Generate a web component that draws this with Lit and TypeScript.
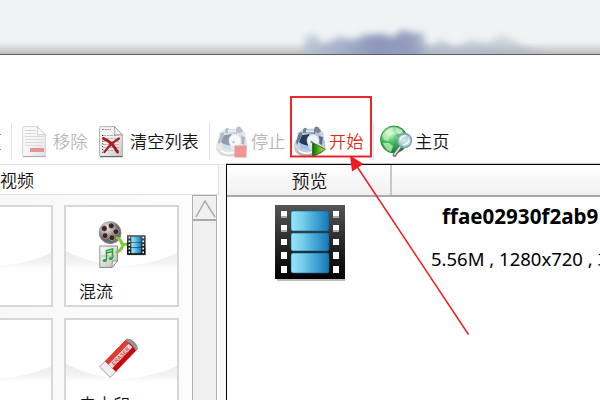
import { LitElement, html, css, svg } from "lit";
import { customElement } from "lit/decorators.js";

const docBase = (id: string) => svg`
  <defs><linearGradient id=${id} x1="0" y1="0" x2="1" y2="1"><stop offset="0" stop-color="#fafafa"/><stop offset=".55" stop-color="#ececec"/><stop offset="1" stop-color="#c4c4c4"/></linearGradient></defs>
  <path d="M1.500 .6H15.500L23.400 9V30.400H1.500Q.6 30.400 .6 29.500V1.500Q.6 .6 1.500 .6Z" fill="url(#${id})" stroke="#a5a5a5" stroke-width=".9"/>
  <path d="M1 30.600H23.500" stroke="#666" stroke-width="1.200"/>
  <path d="M15.500 .6Q16.500 6 15.500 9.200Q20 7.800 23.400 9Z" fill="#fff" stroke="#888" stroke-width=".8"/>`;

const removeIcon = html`<svg class="doc faded" viewBox="0 0 24 32">
  ${docBase("dr")}
  <path d="M3 4.500H14" stroke="#79bddd" stroke-width="1"/>
  <path d="M3 7.500H14M3 10.500H21M3 13.500H21M3 16.500H21M3 19.500H21" stroke="#a5abb1" stroke-width=".8"/>
  <rect x="8" y="22" width="14" height="4" fill="#d12a2a"/>
</svg>`;

const clearIcon = html`<svg class="doc" viewBox="0 0 24 32">
  ${docBase("dc")}
  <path d="M3 3.500H12" stroke="#777" stroke-width=".8" stroke-dasharray="2 .7"/>
  <path d="M4 9.500H20M4 12.500H20M4 15.500H20M4 18.500H20M4 21.500H20M4 24.500H20" stroke="#999" stroke-width=".7" stroke-dasharray="3 .6"/>
  <path d="M3.600 9V27" stroke="#222" stroke-width="1" stroke-dasharray="1 1.800"/>
  <path d="M4.500 12.500Q13 16 18.500 26" fill="none" stroke="#a81818" stroke-width="2.900" stroke-linecap="round"/>
  <path d="M20 12.500Q11 18 5.500 26" fill="none" stroke="#b51c1c" stroke-width="2.200" stroke-linecap="round"/>
</svg>`;

const machine = (id: string) => svg`
  <defs>
    <radialGradient id=${id} cx=".45" cy=".3" r=".8"><stop offset="0" stop-color="#fff"/><stop offset=".6" stop-color="#d6d8dc"/><stop offset="1" stop-color="#85898f"/></radialGradient>
    <linearGradient id="${id}g" x1="0" y1="0" x2="1" y2="0"><stop offset="0" stop-color="#0d6508"/><stop offset=".4" stop-color="#42ad1b"/><stop offset="1" stop-color="#c8f25c"/></linearGradient>
  </defs>
  <path d="M.5 20Q1 14 5 11L27 10Q31 14 31 20Q31 26 25 28Q17 32 6 29Q0 26 .5 20Z" fill="url(#${id})" stroke="#aeb2b8" stroke-width=".6"/>
  <path d="M4 7L9 3.500L26 3L29 7L29.500 17L25 24L8 25L3 19Z" fill="#d7dbe2" stroke="#a3aab5" stroke-width=".6"/>
  <path d="M9 4Q10 1 12 2L14 3.500H20L21 1Q24 -.5 25.500 3L27 6L21 8L9 7Z" fill="#7b828d"/>
  <path d="M12 3.500H20V6.500H12Z" fill="#cfe0ee"/>
  <path d="M5 7L9 6L6 13L3 19L2 16Z" fill="#607c9d"/>
  <path d="M8 9L16 8L13 13L14 20L8 18.500L5 16Z" fill="#253b58"/>
  <path d="M5 17L14 20L16 24L7 23Z" fill="#9cc5ec"/>
  <path d="M21 6L27 8L26 14L22 10Z" fill="#a9c1d8"/>
  <path d="M25 10L29 11L28 19L25.500 18Z" fill="#526d8b"/>
  <circle cx="19" cy="14.500" r="6" fill="#eff2f6" stroke="#c3c9d1" stroke-width=".6"/>
  <circle cx="17.500" cy="16" r="1.300" fill="#8b929c"/>
  <path d="M5 25Q11 29 18 26" fill="none" stroke="#fff" stroke-width="1.800"/>`;

const stopIcon = html`<svg class="machine faded" viewBox="0 0 32 32">
  ${machine("ms")}<rect x="18.500" y="19.500" width="12" height="12" fill="#df3030"/>
</svg>`;

const startIcon = html`<svg class="machine" viewBox="0 0 32 32">
  ${machine("mg")}<path d="M18.500 16.500L31.500 23.500L18.500 31Z" fill="url(#mgg)" stroke="#276417" stroke-width=".8"/>
</svg>`;

const globeIcon = html`<svg class="globe" viewBox="0 0 34 33">
  <defs>
    <radialGradient id="gl" cx=".35" cy=".28" r=".75"><stop offset="0" stop-color="#dcffe0"/><stop offset=".4" stop-color="#4fc466"/><stop offset="1" stop-color="#0b7c2a"/></radialGradient>
    <radialGradient id="lens"><stop offset="0" stop-color="#e4f3fa"/><stop offset="1" stop-color="#a4cbd9"/></radialGradient>
  </defs>
  <circle cx="14" cy="14.500" r="13.500" fill="url(#gl)" stroke="#28803a" stroke-width=".8"/>
  <path d="M2 11Q6 3 13 3L11 6L14 8L10 11L8 16L4 15ZM16 3L22 5L24 9L19 9L16 7ZM3 18L9 18L13 21L11 27Q5 25 3 18ZM16 13L22 11L25 14L20 18Z" fill="#c4f3c4" opacity=".72"/>
  <path d="M5 7Q14 -2 22 5Q24 10 12 10Q5 11 5 7Z" fill="#fff" opacity=".3"/>
  <path d="M20 22L14.500 30" stroke="#626b70" stroke-width="3.800" stroke-linecap="round"/>
  <path d="M20 22L14.500 29.500" stroke="#d6dcdf" stroke-width="1.700" stroke-linecap="round"/>
  <circle cx="24.500" cy="15.500" r="7" fill="url(#lens)" fill-opacity=".9" stroke="#829fac" stroke-width="1.500"/>
  <path d="M20 15Q21 10.500 26 11M23 20Q28 19 29 15" fill="none" stroke="#fff" stroke-width="1.200"/>
</svg>`;

const filmShape = (id: string) => svg`
  <defs>
    <linearGradient id="${id}b" x2="0" y2="1"><stop offset="0" stop-color="#555"/><stop offset=".5" stop-color="#292929"/><stop offset="1" stop-color="#000"/></linearGradient>
    <linearGradient id="${id}c"><stop offset="0" stop-color="#98e5f7"/><stop offset=".3" stop-color="#78cfeb"/><stop offset=".65" stop-color="#40a4d3"/><stop offset="1" stop-color="#1677b3"/></linearGradient>
    <linearGradient id="${id}h" x2="0" y2="1"><stop offset=".7" stop-color="#fff"/><stop offset=".75" stop-color="#aaa"/></linearGradient>
  </defs>
  <rect x="2" y="3" width="68" height="73" fill="#bdbdbd"/>
  <rect width="70" height="74" fill="url(#${id}b)"/>
  ${[6, 28, 48].map((y, i) => svg`<rect x="16" y=${y} width="38" height=${i === 1 ? 18 : 20} rx="2" fill="url(#${id}c)" stroke="#165d86" stroke-width=".6"/>`)}
  ${[6, 20, 34, 47, 61].map((y, i) => [6, 58].map((x) => svg`<rect x=${x} y=${y} width="6" height=${i === 2 ? 6 : 7} fill=${i < 2 ? `url(#${id}h)` : "#fff"}/>`))}`;

const muxIcon = html`<svg class="mux" viewBox="0 0 48 48">
  <defs>
    <radialGradient id="reel" cx=".35" cy=".3"><stop offset="0" stop-color="#f4f2ef"/><stop offset=".55" stop-color="#b2aeaa"/><stop offset="1" stop-color="#6d6967"/></radialGradient>
    <linearGradient id="music" x2="1" y2="1"><stop offset="0" stop-color="#fff"/><stop offset="1" stop-color="#bbb"/></linearGradient>
  </defs>
  <circle cx="12.500" cy="12.200" r="10.800" fill="#77716e"/>
  <circle cx="11.900" cy="11.400" r="10.900" fill="url(#reel)" stroke="#999" stroke-width=".5"/>
  <g fill="#3a2521" stroke="#ddd" stroke-width=".5"><circle cx="13.300" cy="4.800" r="2.900"/><circle cx="6.300" cy="7.500" r="2.900"/><circle cx="7" cy="14.700" r="2.900"/><circle cx="14" cy="16.700" r="2.900"/><circle cx="18" cy="10.700" r="2.900"/></g>
  <path d="M1.800 25H19.500V40L14 46.500H1.800Z" fill="url(#music)" stroke="#777" stroke-width=".8"/>
  <path d="M19.500 40L14 46.500L14.500 40Z" fill="#eee" stroke="#777" stroke-width=".6"/>
  <path d="M3 35H18" stroke="#b9b9b9"/>
  <path d="M8.500 39V29.500L14.500 28V37M8.500 32L14.500 30.500" fill="none" stroke="#21a837" stroke-width="1.500"/>
  <ellipse cx="6.800" cy="39.500" rx="2.100" ry="1.600" fill="#21a837"/><ellipse cx="12.800" cy="37.500" rx="2" ry="1.600" fill="#21a837"/>
  <path d="M18 16.500Q23 18 24 23L31 23.500M18 31.500Q23 30 25 24" fill="none" stroke="#80c93c" stroke-width="3"/>
  <g transform="translate(29 14.200) scale(.265)">${filmShape("fs")}</g>
</svg>`;

const eraserIcon = html`<svg class="eraser" viewBox="0 0 42 42">
  <g transform="translate(.5 29) rotate(-46)">
    <path d="M0 0H9V15H0Z" fill="#eee" stroke="#999" stroke-width=".8"/>
    <path d="M8 0H39Q42 2 42 7.500Q42 13 39 15H8Z" fill="#c90808"/>
    <path d="M8 0H39Q41 2 41.500 5H8Z" fill="#dd3b35"/>
    <path d="M8 4.800H37V10H8Z" fill="#f3dddd"/>
    <path d="M37.500 0H39Q42 2 42 7.500Q42 13 39 15H37Q39 8 37.500 0Z" fill="#8f9797"/>
    <text class="eraser-text" x="11" y="9.600" textLength="23">ERASER</text>
  </g>
</svg>`;

@customElement("function-card")
class FunctionCard extends LitElement {
  static properties = { label: {}, icon: { attribute: false } };
  declare label: string;
  declare icon: unknown;
  static styles = css`
    :host { display: block; box-sizing: border-box; width: 115px; height: 102px; border: 2px solid #d7d7d7; background: #fff; }
    .card { height: 100%; display: grid; grid-template: 1fr / 1fr; }
    .wave { grid-area: 1 / 1; width: 100%; height: 100%; }
    .content { grid-area: 1 / 1; display: flex; flex-direction: column; padding: 14px 0 0 13px; }
    .picture { height: 60px; padding-left: 19px; }
    .label { font: 350 17px/20px "Noto Sans CJK SC", sans-serif; color: #111; white-space: nowrap; }
    svg { display: block; }
    .mux { width: 48px; height: 48px; }
    .eraser { width: 42px; height: 42px; padding: 4px 0 0 1px; }
    .eraser-text { font: bold 5.500px "Liberation Sans", sans-serif; fill: #bb5656; }
  `;
  render() {
    return html`<div class="card">
      <svg class="wave" viewBox="0 0 112 98" preserveAspectRatio="none">
        <defs><linearGradient id="w" x2="0" y2="1"><stop offset="0" stop-color="#ebebeb"/><stop offset=".65" stop-color="#f3f3f3"/><stop offset="1" stop-color="#fff"/></linearGradient></defs>
        <path d="M0 44Q28 58 58 59Q88 57 112 46V62H0Z" fill="url(#w)"/>
      </svg>
      <div class="content"><div class="picture">${this.icon}</div><div class="label">${this.label}</div></div>
    </div>`;
  }
}

@customElement("app-root")
class AppRoot extends LitElement {
  static styles = css`
    :host { display: block; position: relative; width: 600px; height: 400px; overflow: hidden; background: #fff; font-family: "Noto Sans CJK SC", sans-serif; font-weight: 350; color: #111; }
    svg { display: block; flex: none; }
    .desktop { box-sizing: border-box; height: 55px; border-bottom: 1px solid #5d5f62; background: linear-gradient(transparent 42px, #9b9b9b99 54px), #eff3f4; }
    .backdrop { width: 600px; height: 54px; }
    .toolbar { height: 37px; margin-top: 68px; display: flex; align-items: center; font-size: 17.200px; line-height: 24px; white-space: nowrap; }
    .toolbar span { padding-bottom: 2px; }
    .edge { width: 11px; height: 15px; display: flex; }
    .edge::before { content: ""; width: 1px; height: 14px; border: solid #569bc4; border-width: 1px 0; }
    .sep { width: 1px; height: 37px; background: #e2e2e2; flex: none; }
    .tool { display: flex; align-items: center; flex: none; }
    .doc { width: 24px; height: 32px; margin-right: 7px; }
    .machine { width: 32px; height: 32px; margin-right: 3px; }
    .globe { width: 34px; height: 33px; margin-right: 1px; }
    .faded { opacity: .5; }
    .remove { width: 77px; margin-left: 10px; color: #b8b8b8; }
    .clear { width: 110px; }
    .stop { width: 78px; margin-left: 6px; color: #b4b4b4; }
    .start { width: 79px; color: #df2a12; }
    .home { margin-left: 6px; }
    .work { height: 236px; margin-top: 4px; display: flex; }
    .side { width: 219px; flex: none; display: flex; flex-direction: column; }
    .category { box-sizing: border-box; height: 31px; border: solid #e1e1e1; border-width: 1px 1px 1px 0; font-size: 17px; line-height: 29px; }
    .library { display: flex; height: 205px; background: linear-gradient(90deg, #f8f8f8, #fdfdfd); }
    .cards { width: 192px; height: 205px; overflow: hidden; display: grid; grid-template-columns: 115px 115px; grid-auto-rows: 102px; gap: 11px; justify-content: end; box-sizing: border-box; padding: 10px 13px 0 0; }
    .scroll { box-sizing: border-box; width: 25px; height: 205px; border: solid #b1b1b1; border-width: 0 1px; background: #f0f0f0; }
    .up { box-sizing: border-box; height: 26px; border: solid #aaa; border-width: 1px 0 2px; }
    .up svg { width: 23px; height: 23px; }
    .gap { width: 7px; background: #f8f8f8; border-top: 1px solid #e9e9e9; }
    .main { box-sizing: border-box; width: 374px; border: solid #000; border-width: 1px 0 0 1px; background: #fff; box-shadow: 0 -1px #c4c4c4; }
    .columns { box-sizing: border-box; height: 32px; display: flex; border-bottom: 2px solid #aaa; background: linear-gradient(#fff, #f0f0f0); }
    .column { box-sizing: border-box; width: 165px; padding-left: 2px; text-align: center; font-size: 18px; line-height: 31px; border-right: 2px solid #c7c7c7; }
    .row { display: flex; padding: 8px 0 0 48px; }
    .film { width: 70px; height: 76px; }
    .info { flex: none; margin-left: 86px; font-family: "Noto Sans", sans-serif; font-weight: 400; white-space: nowrap; color: #000; }
    .name { padding-left: 11px; font-size: 20.600px; font-weight: 700; line-height: 23px; }
    .details { margin-top: 19px; font-size: 18.500px; line-height: 24px; }
    .callout { position: absolute; inset: 0; width: 600px; height: 400px; }
  `;
  render() {
    return html`
      <div class="desktop"><svg class="backdrop" viewBox="0 0 600 54">
        <defs><filter id="soft" x="-10%" y="-50%" width="120%" height="200%"><feGaussianBlur stdDeviation="3.5 3.5"/></filter>
        <linearGradient id="ink"><stop offset="0" stop-color="#b3bfd2" stop-opacity=".75"/><stop offset=".3" stop-color="#8c97bb"/><stop offset=".45" stop-color="#929bbd" stop-opacity=".95"/><stop offset=".52" stop-color="#aab5c8" stop-opacity=".65"/><stop offset="1" stop-color="#a2adbd" stop-opacity=".35"/></linearGradient></defs>
        <path filter="url(#soft)" fill="url(#ink)" d="M302 76L305 38L315 34L322 44L340 37L352 40L365 35L381 34L393 37L402 30L412 33L423 33L427 47L442 40L455 48L471 40L487 43L502 35L514 41L526 47L550 58V76Z"/>
      </svg></div>
      <div class="toolbar">
        <div class="edge"></div><i class="sep"></i>
        <div class="tool remove">${removeIcon}<span>移除</span></div>
        <div class="tool clear">${clearIcon}<span>清空列表</span></div><i class="sep"></i>
        <div class="tool stop">${stopIcon}<span>停止</span></div>
        <div class="tool start">${startIcon}<span>开始</span></div><i class="sep"></i>
        <div class="tool home">${globeIcon}<span>主页</span></div>
      </div>
      <div class="work">
        <div class="side">
          <div class="category">视频</div>
          <div class="library">
            <div class="cards">
              <function-card></function-card><function-card .label=${"混流"} .icon=${muxIcon}></function-card>
              <function-card></function-card><function-card .label=${"去水印"} .icon=${eraserIcon}></function-card>
            </div>
            <div class="scroll"><div class="up"><svg viewBox="0 0 23 23"><path d="M3 21L12 5L22 21" fill="none" stroke="#aaa" stroke-width="1.500"/></svg></div></div>
          </div>
        </div>
        <div class="gap"></div>
        <div class="main">
          <div class="columns"><div class="column">预览</div></div>
          <div class="row"><svg class="film" viewBox="0 0 70 76">${filmShape("fl")}</svg>
            <div class="info"><div class="name">ffae02930f2ab9</div><div class="details">5.56M , 1280x720 , 3</div></div>
          </div>
        </div>
      </div>
      <svg class="callout" viewBox="0 0 600 400">
        <rect x="291" y="97" width="80" height="59.500" fill="none" stroke="#ed1c24" stroke-width="1.900"/>
        <path d="M356 165L468.500 334.500" stroke="#ed1c24" stroke-width="1.500"/>
        <path d="M350 155.500L363.500 164L352 171.500Z" fill="#ed1c24"/>
      </svg>`;
  }
}
